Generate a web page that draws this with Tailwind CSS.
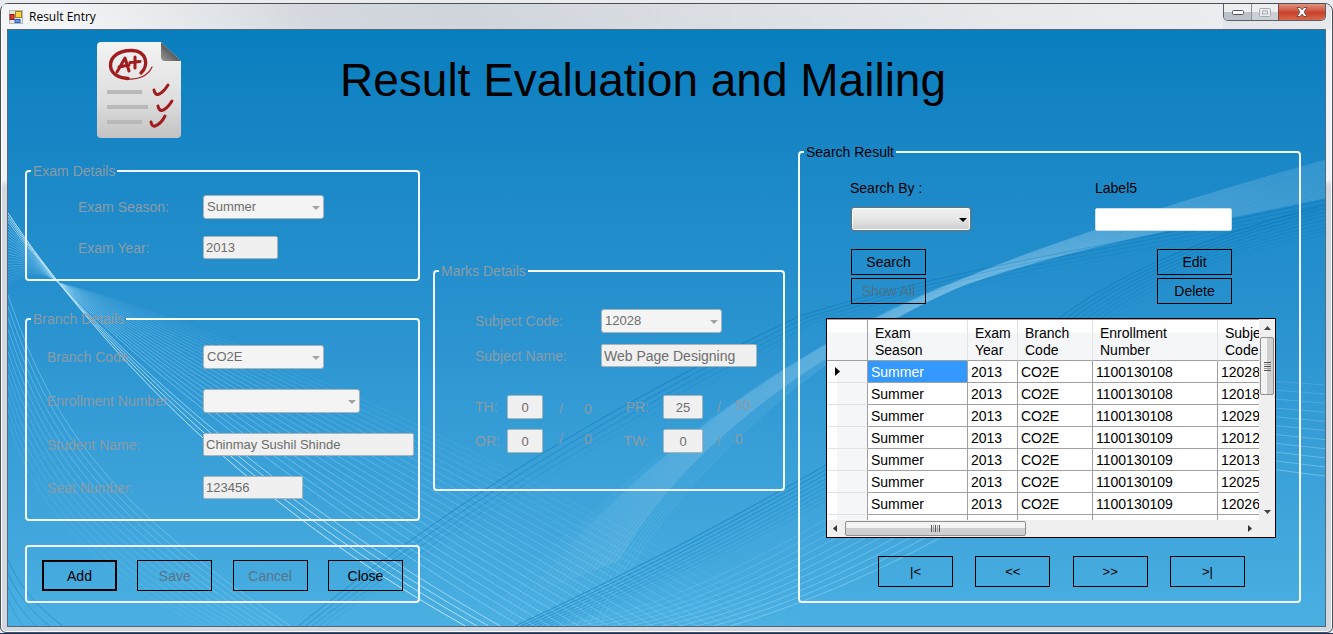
<!DOCTYPE html>
<html lang="en">
<head>
<meta charset="utf-8">
<meta name="viewport" content="width=device-width, initial-scale=1">
<title>Result Entry</title>
<script src="https://cdn.jsdelivr.net/npm/@tailwindcss/browser@4"></script>
</head>
<body class="min-h-screen bg-[#1b3264] pb-px font-['Liberation_Sans',Arial,sans-serif] text-sm leading-4 text-black">
<div class="flex min-h-[calc(100vh-1px)] flex-col bg-[#e9ebee] pt-[3px]">
<div class="flex grow flex-col rounded-t-lg rounded-b-md border border-[#4a4f55] bg-linear-to-b from-[#f1f2f5] from-28% to-[#d3d7df] to-29% px-[6px] pb-[5px] shadow-[inset_0_0_0_1px_#fbfcfd]">
  <header class="-mx-[5px] flex h-[25px] items-start rounded-t-md bg-linear-[50deg] from-[#e4e7ea] from-0% via-[#cdd2d9] via-35% to-[#e6e8ec] to-100%">
    <div class="flex h-[25px] grow items-center gap-[6px] bg-linear-[60deg] from-white/60 from-5% via-transparent via-25% to-white/30 to-90% pl-[7px]">
      <svg class="size-[14px]" viewBox="0 0 14 14" aria-hidden="true">
        <rect x=".5" y=".5" width="13" height="13" fill="#e4e6ea" stroke="#b5b8bd"/>
        <rect x="6.500" y="1.500" width="6" height="6" fill="#fbd348" stroke="#a97f10"/>
        <rect x="1" y="4.500" width="4" height="5" fill="#d9412c" stroke="#8f1a10"/>
        <rect x="6" y="9.500" width="5" height="3" fill="#5a9bf0" stroke="#2c5fb8"/>
      </svg>
      <h2 class="font-['Open_Sans','Noto_Sans',sans-serif] text-xs">Result Entry</h2>
    </div>
    <div class="flex h-[17px] overflow-hidden rounded-b-[5px] border border-t-0 border-[#5b6067]">
      <button type="button" aria-label="Minimize" class="flex w-[28px] items-center justify-center border-r border-[#8b9097] bg-linear-to-b from-[#eceef0] from-50% to-[#bcc2c9] to-50%">
        <svg class="h-[5px] w-3" viewBox="0 0 12 5" aria-hidden="true"><rect x=".5" y=".5" width="11" height="4" rx="1" fill="#fff" stroke="#50565e"/></svg>
      </button>
      <button type="button" aria-label="Maximize" disabled class="flex w-[27px] items-center justify-center border-r border-[#7b4a44] bg-linear-to-b from-[#eceef0] from-50% to-[#cbd0d5] to-50%">
        <svg class="h-[9px] w-3" viewBox="0 0 12 9" aria-hidden="true"><rect x=".5" y=".5" width="11" height="8" rx="1" fill="#e9ebed" stroke="#a7acb2"/><rect x="3.500" y="3" width="5" height="3" fill="none" stroke="#a7acb2"/></svg>
      </button>
      <button type="button" aria-label="Close window" class="flex w-[46px] items-center justify-center bg-linear-to-b from-[#e0937f] from-0% via-[#c8402a] via-55% to-[#d9694a]">
        <svg class="h-[10px] w-3" viewBox="0 0 12 10" aria-hidden="true"><path d="M1 .5h3L6 2.800 8 .5h3L8 5l3 4.500H8L6 7.200 4 9.500H1L4 5z" fill="#fff" stroke="#6a4a4a" stroke-width=".9"/></svg>
      </button>
    </div>
    <span class="w-[5px]"></span>
  </header>

  <main class="relative isolate grow border border-[#53697b] bg-linear-to-b from-[#087ebf] via-[#2892cf] via-48% to-[#4aafe1]">
    <svg id="waves" class="absolute inset-0 -z-10 size-full" viewBox="7 30 1319 596" preserveAspectRatio="none" fill="none" aria-hidden="true">
      <defs>
        <linearGradient id="beam" x1="1" y1="0" x2="0" y2="0"><stop offset="0" stop-color="#fff" stop-opacity=".08"/><stop offset=".5" stop-color="#fff" stop-opacity=".2"/><stop offset=".75" stop-color="#fff" stop-opacity=".14"/><stop offset="1" stop-color="#fff" stop-opacity="0"/></linearGradient>
      </defs>
      <path d="M1326 160C1200 195 1060 238 960 280C860 320 680 410 520 600L620 560C690 430 860 330 965 285C1080 245 1200 225 1326 198Z" fill="url(#beam)"/>
    </svg>

    <div class="flex h-[114px] items-start pt-3 pl-[89px]">
      <svg class="h-24 w-[84px] shrink-0" viewBox="0 0 84 96" fill="none" aria-hidden="true">
        <defs>
          <linearGradient id="sheet" x1="0" y1="0" x2="0" y2="1"><stop stop-color="#f3f3f3"/><stop offset=".6" stop-color="#dedede"/><stop offset="1" stop-color="#c3c3c3"/></linearGradient>
          <linearGradient id="fold" x1="1" y1="0" x2="0" y2="1"><stop offset=".45" stop-color="#555"/><stop offset="1" stop-color="#9a9a9a"/></linearGradient>
        </defs>
        <path d="M4 0H64L84 19V92Q84 96 80 96H4Q0 96 0 92V4Q0 0 4 0Z" fill="url(#sheet)"/>
        <path d="M64 0L84 19H68Q64 19 64 15Z" fill="url(#fold)"/>
        <path d="M10 50H45M10 65H51M10 80H45" stroke="#b9b9b9" stroke-width="4"/>
        <g stroke="#a01c1e" stroke-linecap="round" stroke-linejoin="round">
          <path d="M44 31C52 24 50 9 35 8.500C22 8 13 15 13.500 24C14 32 22 36 31 36.500" stroke-width="3.400"/>
          <path d="M28 36.500C40 39 51 34 55 25" stroke-width="1.200"/>
          <path d="M20 30L28 16L32 29M22 25L32 23M38 15L38 26M33 20.500L43 19.500" stroke-width="3"/>
          <path d="M57 48Q58 53 61 52.500Q66 51 71 43M61 64Q62 69 65 68.500Q70 67 75 59M54 80Q55 85 58 84Q64 82 68 74" stroke-width="3"/>
        </g>
      </svg>
      <h1 class="mt-2 ml-[159px] text-[46px] leading-[60px] whitespace-nowrap">Result Evaluation and Mailing</h1>
    </div>

    <form class="grid grid-cols-[395fr_352fr_503fr] items-start gap-x-[13px] pr-[24px] pb-[22px] pl-[17px]">
      <div class="mt-[19px]">
        <fieldset class="rounded-[4px] border-2 border-[#f2fbff] pt-4 pb-5 pl-[51px]">
          <legend class="-ml-[47px] px-0.5 text-[#8a9ba6]">Exam Details</legend>
          <div class="grid grid-cols-[125px_1fr] items-center gap-y-[17px]">
            <label for="season" class="text-[#8a9ba6]">Exam Season:</label>
            <div class="relative w-[121px]">
              <select id="season" disabled class="block h-6 w-full appearance-none rounded-[3px] border border-[#a9b4ba] bg-[#f4f4f4] pl-[3px] text-[13px] text-[#6d6d6d] opacity-100"><option>Summer</option></select>
              <svg class="pointer-events-none absolute top-[11px] right-1 h-1 w-2" viewBox="0 0 8 4" aria-hidden="true"><path d="M0 0h8L4 4z" fill="#a3a3a3"/></svg>
            </div>
            <label for="year" class="text-[#8a9ba6]">Exam Year:</label>
            <input id="year" disabled value="2013" class="h-[23px] w-[75px] rounded-[2px] border border-[#a9b4ba] bg-[#f0f0f0] px-0.5 text-[13px] text-[#6d6d6d]">
          </div>
        </fieldset>

        <fieldset class="mt-[30px] rounded-[4px] border-2 border-[#f2fbff] pt-[18px] pb-5 pl-5">
          <legend class="-ml-4 px-0.5 text-[#8a9ba6]">Branch Details</legend>
          <div class="grid grid-cols-[156px_1fr] items-center gap-y-5">
            <label for="branch" class="text-[#8a9ba6]">Branch Code</label>
            <div class="relative w-[121px]">
              <select id="branch" disabled class="block h-6 w-full appearance-none rounded-[3px] border border-[#a9b4ba] bg-[#f4f4f4] pl-[3px] text-[13px] text-[#6d6d6d] opacity-100"><option>CO2E</option></select>
              <svg class="pointer-events-none absolute top-[11px] right-1 h-1 w-2" viewBox="0 0 8 4" aria-hidden="true"><path d="M0 0h8L4 4z" fill="#a3a3a3"/></svg>
            </div>
            <label for="enroll" class="text-[#8a9ba6]">Enrollment Number</label>
            <div class="relative w-[157px]">
              <select id="enroll" disabled class="block h-6 w-full appearance-none rounded-[3px] border border-[#a9b4ba] bg-[#f4f4f4] pl-[3px] text-[13px] text-[#6d6d6d] opacity-100"><option></option></select>
              <svg class="pointer-events-none absolute top-[11px] right-1 h-1 w-2" viewBox="0 0 8 4" aria-hidden="true"><path d="M0 0h8L4 4z" fill="#a3a3a3"/></svg>
            </div>
            <label for="student" class="text-[#8a9ba6]">Student Name:</label>
            <input id="student" disabled value="Chinmay Sushil Shinde" class="h-[23px] w-[211px] rounded-[2px] border border-[#a9b4ba] bg-[#f0f0f0] px-0.5 text-[13px] text-[#6d6d6d]">
            <label for="seat" class="text-[#8a9ba6]">Seat Number:</label>
            <input id="seat" disabled value="123456" class="h-[23px] w-[100px] rounded-[2px] border border-[#a9b4ba] bg-[#f0f0f0] px-0.5 text-[13px] text-[#6d6d6d]">
          </div>
        </fieldset>

        <div class="mt-6 flex justify-between rounded-[4px] border-2 border-[#f2fbff] px-[15px] pt-[13px] pb-[10px]">
          <button type="button" class="h-[31px] w-[75px] border-2 border-black">Add</button>
          <button type="button" disabled class="h-[31px] w-[75px] border border-black text-[#5a7484]">Save</button>
          <button type="button" disabled class="h-[31px] w-[75px] border border-black text-[#5a7484]">Cancel</button>
          <button type="button" class="h-[31px] w-[75px] border border-black">Close</button>
        </div>
      </div>

      <fieldset class="mt-[119px] rounded-[4px] border-2 border-[#f2fbff] pt-[30px] pb-9 pl-10">
        <legend class="-ml-9 px-0.5 text-[#8a9ba6]">Marks Details</legend>
        <div class="grid grid-cols-[126px_1fr] items-center gap-y-[11px]">
          <label for="subcode" class="text-[#8a9ba6]">Subject Code:</label>
          <div class="relative w-[121px]">
            <select id="subcode" disabled class="block h-6 w-full appearance-none rounded-[3px] border border-[#a9b4ba] bg-[#f4f4f4] pl-[3px] text-[13px] text-[#6d6d6d] opacity-100"><option>12028</option></select>
            <svg class="pointer-events-none absolute top-[11px] right-1 h-1 w-2" viewBox="0 0 8 4" aria-hidden="true"><path d="M0 0h8L4 4z" fill="#a3a3a3"/></svg>
          </div>
          <label for="subname" class="text-[#8a9ba6]">Subject Name:</label>
          <input id="subname" disabled value="Web Page Designing" class="h-[23px] w-[156px] rounded-[2px] border border-[#a9b4ba] bg-[#f0f0f0] px-0.5 text-[#6d6d6d]">
        </div>
        <div class="mt-7 grid grid-cols-[32px_36px_36px_18px_66px_40px_32px_24px] items-center gap-y-[10px] leading-5 text-[#8a9ba6]">
          <label for="th">TH:</label>
          <input id="th" disabled value="0" class="h-6 w-full rounded-[2px] border border-[#a9b4ba] bg-[#f0f0f0] text-center text-[13px] text-[#6d6d6d]">
          <span class="self-end text-center">/</span>
          <span class="self-end text-center">0</span>
          <label for="pr" class="pr-[14px] text-right">PR:</label>
          <input id="pr" disabled value="25" class="h-6 w-full rounded-[2px] border border-[#a9b4ba] bg-[#f0f0f0] text-center text-[13px] text-[#6d6d6d]">
          <span class="text-center">/</span>
          <span class="self-start">50</span>
          <label for="or">OR:</label>
          <input id="or" disabled value="0" class="h-6 w-full rounded-[2px] border border-[#a9b4ba] bg-[#f0f0f0] text-center text-[13px] text-[#6d6d6d]">
          <span class="self-start text-center">/</span>
          <span class="self-start text-center">0</span>
          <label for="tw" class="pr-[14px] text-right">TW:</label>
          <input id="tw" disabled value="0" class="h-6 w-full rounded-[2px] border border-[#a9b4ba] bg-[#f0f0f0] text-center text-[13px] text-[#6d6d6d]">
          <span class="text-center">/</span>
          <span class="self-start">0</span>
        </div>
      </fieldset>

      <fieldset class="min-w-0 rounded-[4px] border-2 border-[#f2fbff] pt-5 pb-[14px]">
        <legend class="ml-1 px-0.5">Search Result</legend>
        <div class="flex items-end justify-between pr-[67px] pl-[51px]">
          <div class="flex flex-col gap-[11px]">
            <label for="searchby" class="-ml-px">Search By :</label>
            <div class="relative w-[120px]">
              <select id="searchby" class="block h-6 w-full appearance-none rounded-[3px] border border-[#707070] bg-linear-to-b from-[#f2f2f2] from-0% via-[#e6e6e6] via-50% to-[#cdcdcd] pl-[3px] shadow-[inset_0_0_0_1px_#fafafa]"><option></option></select>
              <svg class="pointer-events-none absolute top-[11px] right-1 h-1 w-2" viewBox="0 0 8 4" aria-hidden="true"><path d="M0 0h8L4 4z" fill="#000"/></svg>
            </div>
          </div>
          <div class="flex w-[137px] flex-col gap-3">
            <label for="term">Label5</label>
            <input id="term" class="h-[23px] w-full rounded-[2px] border border-[#c9e3ee] bg-white px-0.5">
          </div>
        </div>
        <div class="mt-[18px] flex justify-between pr-[67px] pl-[51px]">
          <div class="flex w-[75px] flex-col gap-[3px]">
            <button type="button" class="h-[26px] border border-black">Search</button>
            <button type="button" disabled class="h-[26px] border border-black text-[#4b7289]">Show All</button>
          </div>
          <div class="flex w-[75px] flex-col gap-[3px]">
            <button type="button" class="h-[26px] border border-black">Edit</button>
            <button type="button" class="h-[26px] border border-black">Delete</button>
          </div>
        </div>

        <div class="mt-[14px] mr-[23px] ml-[26px] border border-black bg-[#f0f0f0]">
          <div class="flex h-[201px]">
            <div class="min-w-0 grow overflow-hidden border-t border-[#a0a0a0] bg-white">
              <table class="w-[490px] table-fixed border-separate border-spacing-0 whitespace-nowrap">
                <colgroup><col class="w-[41px]"><col class="w-[100px]"><col class="w-[50px]"><col class="w-[75px]"><col class="w-[125px]"><col class="w-[99px]"></colgroup>
                <thead>
                  <tr class="h-[41px] bg-linear-to-b from-white from-30% to-[#f5f6f8] to-31% text-left leading-[17px] *:border-b *:border-b-[#a0a0a0] *:p-0 *:pt-1 *:font-normal">
                    <td class="border-r border-r-[#a0a0a0]"></td>
                    <th class="border-r border-r-[#e2e3e5]"><div class="pl-[7px]">Exam<br>Season</div></th>
                    <th class="border-r border-r-[#e2e3e5]"><div class="pl-[7px]">Exam<br>Year</div></th>
                    <th class="border-r border-r-[#e2e3e5]"><div class="pl-[7px]">Branch<br>Code</div></th>
                    <th class="border-r border-r-[#e2e3e5]"><div class="pl-[7px]">Enrollment<br>Number</div></th>
                    <th><div class="pl-[7px]">Subject<br>Code</div></th>
                  </tr>
                </thead>
                <tbody id="rows"></tbody>
              </table>
            </div>
            <div class="flex w-4 shrink-0 flex-col items-center bg-[#efefef] pt-[7px] pb-[6px]" role="scrollbar" aria-label="Vertical" aria-controls="rows" aria-orientation="vertical" aria-valuenow="0">
              <svg class="h-1 w-[7px]" viewBox="0 0 7 4" aria-hidden="true"><path d="M0 4h7L3.500 0z" fill="#444"/></svg>
              <span class="mt-[7px] flex h-[58px] w-[14px] flex-col items-center justify-center gap-px rounded-[2px] border border-[#8f8f8f] bg-linear-to-r from-[#f3f3f3] from-50% to-[#cfcfd2] to-51%"><i class="h-px w-[7px] bg-[#555]"></i><i class="h-px w-[7px] bg-[#999]"></i><i class="h-px w-[7px] bg-[#555]"></i><i class="h-px w-[7px] bg-[#999]"></i><i class="h-px w-[7px] bg-[#555]"></i></span>
              <svg class="mt-auto h-1 w-[7px]" viewBox="0 0 7 4" aria-hidden="true"><path d="M0 0h7L3.500 4z" fill="#444"/></svg>
            </div>
          </div>
          <div class="flex h-[17px] items-center bg-[#efefef] pr-[23px] pl-[6px]" role="scrollbar" aria-label="Horizontal" aria-controls="rows" aria-orientation="horizontal" aria-valuenow="0">
            <svg class="h-[7px] w-1" viewBox="0 0 4 7" aria-hidden="true"><path d="M4 0v7L0 3.500z" fill="#333"/></svg>
            <span class="ml-2 flex h-[15px] w-[181px] items-center justify-center gap-px rounded-[2px] border border-[#8f8f8f] bg-linear-to-b from-[#f3f3f3] from-45% to-[#cfcfd2] to-46%"><i class="h-[7px] w-px bg-[#555]"></i><i class="h-[7px] w-px bg-[#999]"></i><i class="h-[7px] w-px bg-[#555]"></i><i class="h-[7px] w-px bg-[#999]"></i><i class="h-[7px] w-px bg-[#555]"></i></span>
            <svg class="ml-auto h-[7px] w-1" viewBox="0 0 4 7" aria-hidden="true"><path d="M0 0v7L4 3.500z" fill="#333"/></svg>
          </div>
        </div>

        <div class="mt-[18px] flex justify-between pr-[54px] pl-[78px] text-[13px]">
          <button type="button" aria-label="First" class="h-[31px] w-[75px] border border-black">|&lt;</button>
          <button type="button" aria-label="Previous" class="h-[31px] w-[75px] border border-black">&lt;&lt;</button>
          <button type="button" aria-label="Next" class="h-[31px] w-[75px] border border-black">&gt;&gt;</button>
          <button type="button" aria-label="Last" class="h-[31px] w-[75px] border border-black">&gt;|</button>
        </div>
      </fieldset>
    </form>
  </main>
</div>
</div>

<script>
  // Result grid rows: enrollment number and subject code vary
  const results = [
    ['1100130108', '12028'], ['1100130108', '12018'], ['1100130108', '12029'],
    ['1100130109', '12012'], ['1100130109', '12013'], ['1100130109', '12025'],
    ['1100130109', '12026'], null
  ];
  const cell = 'border-r border-b border-[#a0a0a0] p-0 pl-[3px]';
  document.getElementById('rows').innerHTML = results.map((r, i) => {
    const data = r ? ['Summer', '2013', 'CO2E', r[0], r[1]] : ['', '', '', '', ''];
    const marker = i === 0 ? '<svg class="ml-2 h-[9px] w-[5px]" viewBox="0 0 5 9" aria-hidden="true"><path d="M0 0v9L5 4.500z"/></svg>' : '';
    return '<tr class="h-[22px]"><td class="border-r border-b border-r-[#a0a0a0] border-b-[#e2e3e5] bg-linear-to-r from-white from-25% to-[#f5f6f8] to-26% p-0">' + marker + '</td>' +
      data.map((v, j) => '<td class="' + cell + (i === 0 && j === 0 ? ' bg-[#3399ff] text-white' : '') + '">' + v + '</td>').join('') + '</tr>';
  }).join('');

  // Background waves: each family blends from one curve to another.
  // [first curve, last curve, line count, colour, first opacity, last opacity]
  const families = [
    [[7,213,25,240,40,260,58,283,120,360,240,500,465,626],[7,222,25,245,40,262,58,283,125,355,260,490,500,626],4,'#d5f1ff',.85,.6],
    [[7,226,25,245,40,262,58,283,130,355,290,490,520,626],[7,285,25,272,40,270,58,283,170,310,460,430,800,626],20,'#a5dcfa',.5,.1],
    [[7,295,50,420,100,500,290,626],[7,420,30,500,90,570,200,626],12,'#8fd4f6',.5,.15],
    [[7,560,20,590,40,610,62,626],[7,600,12,610,16,618,22,626],4,'#0f7fbd',.5,.3],
    [[298,626,440,510,600,410,800,316,960,265,1150,240,1326,200],[325,626,470,520,640,415,820,325,980,275,1160,255,1326,215],5,'#0872b4',.5,.1],
    [[480,626,600,480,820,330,960,280,1060,240,1200,195,1326,160],[600,626,660,480,840,335,965,285,1080,245,1200,225,1326,198],22,'#b5e2fb',.1,.16],
    [[515,626,700,540,900,430,1060,318,1130,265,1230,230,1326,205],[560,626,740,560,940,440,1100,330,1170,275,1250,250,1326,235],9,'#0872b4',.55,.12],
    [[560,626,720,600,850,500,980,430,1100,370,1200,375,1326,385],[730,626,820,600,930,550,1020,490,1130,440,1230,465,1326,476],11,'#9fdbf8',.2,.5]
  ];
  const waves = document.getElementById('waves');
  for (const [a, b, n, color, o1, o2] of families) {
    for (let i = 0; i < n; i++) {
      const t = i / (n - 1);
      const p = a.map((v, k) => (v + (b[k] - v) * t).toFixed(1));
      const path = document.createElementNS('http://www.w3.org/2000/svg', 'path');
      path.setAttribute('d', 'M' + p.slice(0, 2) + 'C' + p.slice(2));
      path.setAttribute('stroke', color);
      path.setAttribute('stroke-opacity', (o1 + (o2 - o1) * t).toFixed(2));
      waves.appendChild(path);
    }
  }
</script>
</body>
</html>
